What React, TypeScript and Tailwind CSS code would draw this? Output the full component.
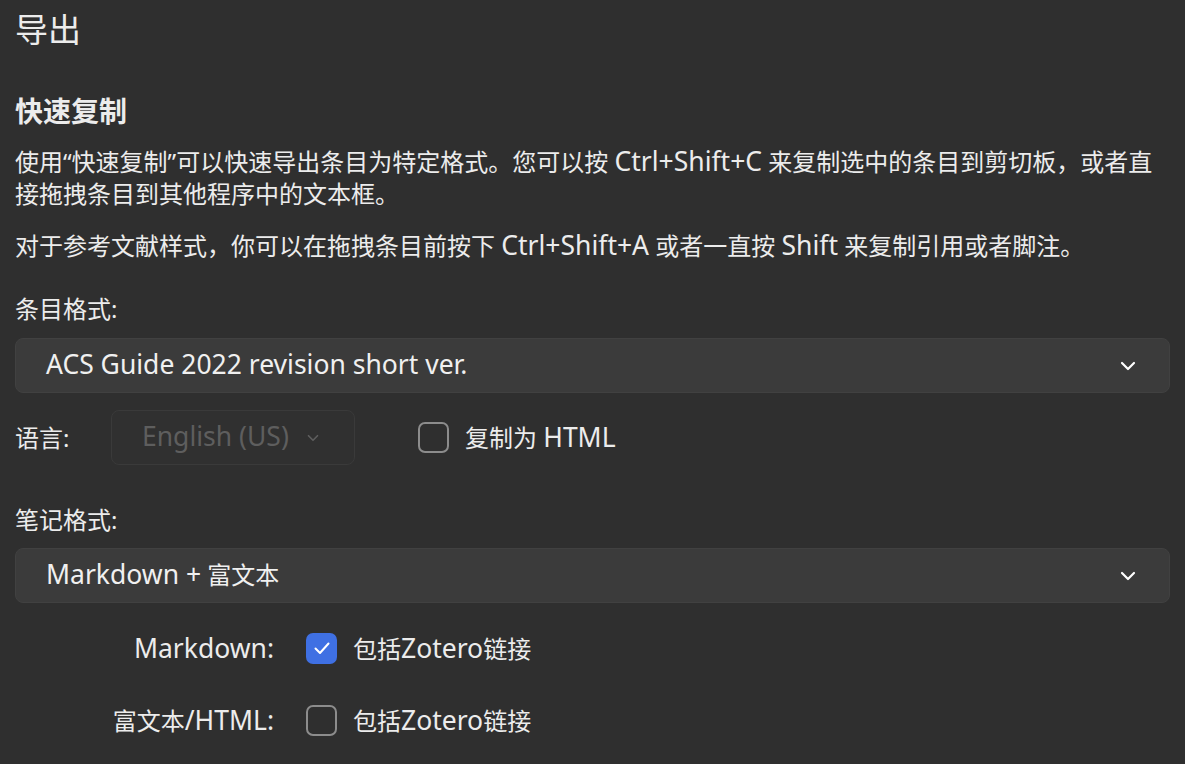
import React, { useState } from 'react';

const FONT = { fontFamily: '"Noto Sans", "Noto Sans CJK SC", sans-serif' };

// Latin runs render a bit larger than the CJK glyphs, like YaHei UI does
const L: React.FC<{ children: React.ReactNode }> = ({ children }) => (
  <span className="text-[26.5px]">{children}</span>
);

const Chevron: React.FC<{ className?: string }> = ({ className }) => (
  <svg viewBox="0 0 16 10" className={className} fill="none" stroke="currentColor" strokeWidth={2.2} strokeLinecap="round" strokeLinejoin="round">
    <path d="M2 2l6 6 6-6" />
  </svg>
);

const Checkbox: React.FC<{ checked: boolean; onChange: () => void }> = ({ checked, onChange }) => (
  <button
    onClick={onChange}
    className={`w-[31px] h-[31px] rounded-[7px] flex items-center justify-center shrink-0 ${checked ? 'bg-[#3f70e3]' : 'border-2 border-[#8c8c8c] bg-transparent'}`}
  >
    {checked && (
      <svg viewBox="0 0 20 20" className="w-[20px] h-[20px]" fill="none" stroke="white" strokeWidth={2} strokeLinecap="round" strokeLinejoin="round">
        <path d="M3.5 10.5l4.5 4.5 8.5-9.5" />
      </svg>
    )}
  </button>
);

const Dropdown: React.FC<{ children: React.ReactNode }> = ({ children }) => (
  <div className="h-[55px] rounded-[8px] bg-[#3b3b3b] border border-[#414141] flex items-center justify-between pl-[30px] pr-[33px] text-[24px] leading-[32px] text-[#f0f0f0]">
    <span className="-mt-[2px]">{children}</span>
    <Chevron className="w-[16px] h-[10px] text-white" />
  </div>
);

export default function App() {
  const [asHtml, setAsHtml] = useState(false);
  const [mdLinks, setMdLinks] = useState(true);
  const [htmlLinks, setHtmlLinks] = useState(false);

  return (
    <div className="w-[1185px] h-[764px] overflow-hidden bg-[#2f2f2f] text-[#ececec] px-[15px]" style={FONT}>
      <h1 className="text-[33px] leading-[40px] mt-[10px]">导出</h1>

      <h2 className="text-[28px] leading-[34px] font-bold mt-[44px]">快速复制</h2>
      <p className="text-[24px] leading-[32px] mt-[17px]">
        使用“快速复制”可以快速导出条目为特定格式。您可以按 <L>Ctrl+Shift+C</L> 来复制选中的条目到剪切板，或者直
        <br />
        接拖拽条目到其他程序中的文本框。
      </p>
      <p className="text-[24px] leading-[32px] mt-[19px]">
        对于参考文献样式，你可以在拖拽条目前按下 <L>Ctrl+Shift+A</L> 或者一直按 <L>Shift</L> 来复制引用或者脚注。
      </p>

      <div className="text-[24px] leading-[32px] mt-[31px]">条目格式:</div>
      <div className="mt-[13px]">
        <Dropdown>
          <L>ACS Guide 2022 revision short ver.</L>
        </Dropdown>
      </div>

      <div className="flex items-center mt-[17px] text-[24px] leading-[32px]">
        <span className="w-[96px]">语言:</span>
        <div className="w-[244px] h-[55px] rounded-[8px] border border-[#3a3a3a] bg-[#303030] flex items-center pl-[30px] gap-[18px] text-[#5e5e5e]">
          <span className="-mt-[2px]">
            <L>English (US)</L>
          </span>
          <Chevron className="w-[12px] h-[8px] text-[#5e5e5e]" />
        </div>
        <div className="flex items-center gap-[16px] ml-[63px]">
          <Checkbox checked={asHtml} onChange={() => setAsHtml(!asHtml)} />
          <span>
            复制为 <L>HTML</L>
          </span>
        </div>
      </div>

      <div className="text-[24px] leading-[32px] mt-[39px]">笔记格式:</div>
      <div className="mt-[12px]">
        <Dropdown>
          <L>Markdown +</L> 富文本
        </Dropdown>
      </div>

      <div className="flex items-center h-[40px] mt-[25px] text-[24px] leading-[32px]">
        <span className="w-[259px] text-right">
          <L>Markdown:</L>
        </span>
        <div className="flex items-center gap-[16px] ml-[32px]">
          <Checkbox checked={mdLinks} onChange={() => setMdLinks(!mdLinks)} />
          <span>
            包括<L>Zotero</L>链接
          </span>
        </div>
      </div>
      <div className="flex items-center h-[40px] mt-[32px] text-[24px] leading-[32px]">
        <span className="w-[259px] text-right">
          富文本<L>/HTML:</L>
        </span>
        <div className="flex items-center gap-[16px] ml-[32px]">
          <Checkbox checked={htmlLinks} onChange={() => setHtmlLinks(!htmlLinks)} />
          <span>
            包括<L>Zotero</L>链接
          </span>
        </div>
      </div>
    </div>
  );
}
